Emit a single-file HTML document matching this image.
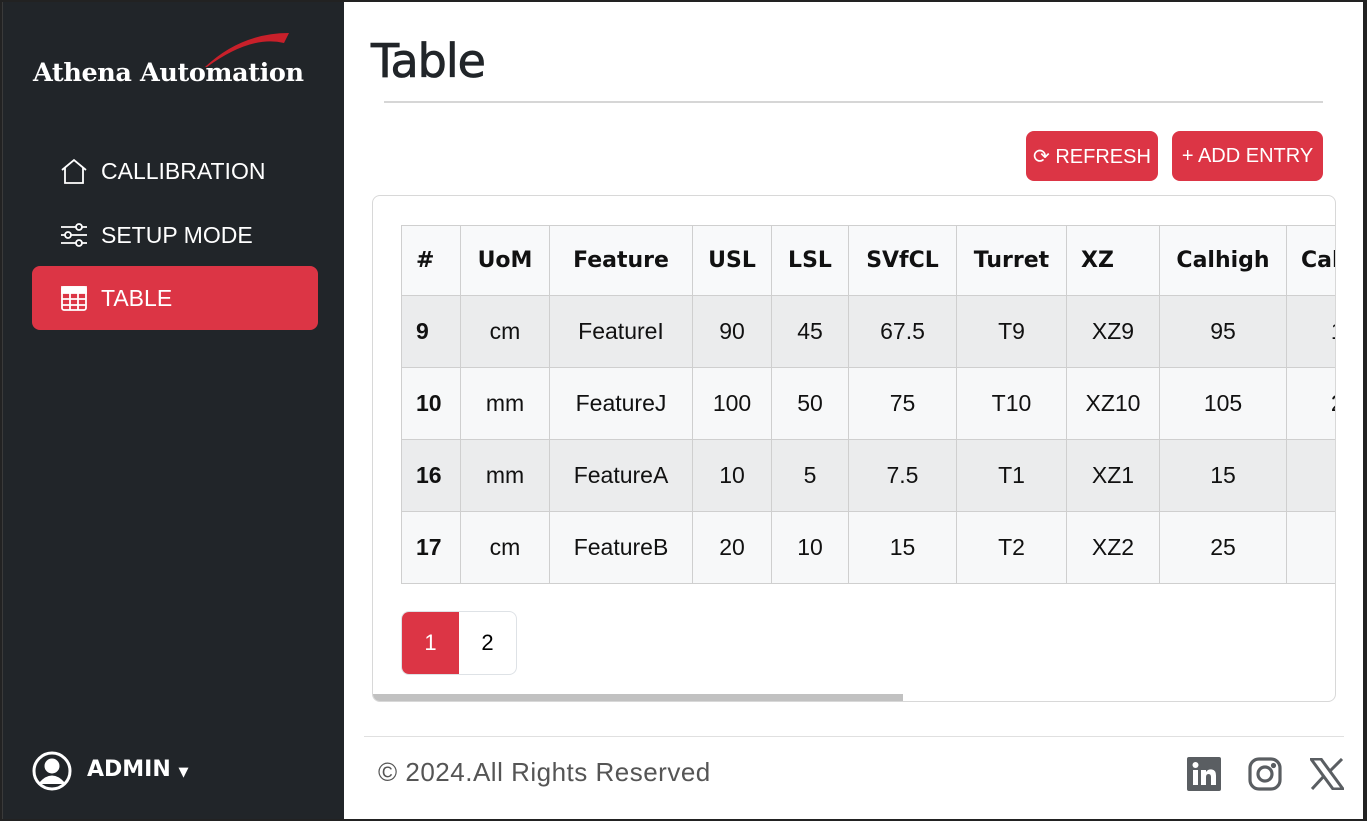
<!DOCTYPE html>
<html><head><meta charset="utf-8"><style>
*{box-sizing:border-box;margin:0;padding:0}
body{width:1367px;height:821px;overflow:hidden;background:#222;font-family:"DejaVu Sans","Liberation Sans",sans-serif;position:relative}
.side{position:absolute;left:2px;top:2px;width:342px;height:817px;background:#212529;border-left:1px solid #3a3a3a}
.main{position:absolute;left:344px;top:2px;width:1019px;height:817px;background:#fff}
.logo{position:absolute;left:30px;top:56px;color:#fff;font-family:"DejaVu Serif","Liberation Serif",serif;font-weight:bold;font-size:25.5px;letter-spacing:-0.4px}
.nav{position:absolute;left:56px;color:#fff;font-size:23px;display:flex;align-items:center;gap:12px;font-family:"Liberation Sans",sans-serif}
.act{position:absolute;left:29px;top:264px;width:286px;height:64px;background:#dc3545;border-radius:8px}
h1{position:absolute;left:27px;top:32px;font-size:46px;color:#212529;font-family:"DejaVu Sans",sans-serif;font-weight:normal;letter-spacing:-1px;-webkit-text-stroke:0.8px #212529}
.hr{position:absolute;left:40px;top:99px;width:939px;height:2px;background:#d6d6d6}
.btn{position:absolute;top:129px;height:50px;background:#dc3545;color:#fff;border-radius:8px;font-size:20px;font-family:"Liberation Sans",sans-serif;display:flex;align-items:center;justify-content:center}
.card{position:absolute;left:28px;top:193px;width:964px;height:507px;border:1px solid #d8d8d8;border-radius:8px;overflow:hidden}
table{position:absolute;left:28px;top:29px;border-collapse:collapse;table-layout:fixed;width:1012px;font-size:23px;color:#111}
td,th{border:1.5px solid #cfcfcf;text-align:center;height:72px;font-family:"Liberation Sans",sans-serif;white-space:nowrap;overflow:hidden}
th{height:70px;background:#f8f9fa;font-weight:bold;font-family:"DejaVu Sans",sans-serif;font-size:22px}
th:first-child,td:first-child{text-align:left;padding-left:14px;font-weight:bold}
tr.g td{background:#ebeced}tr.l td{background:#f7f8f9}
.pg{position:absolute;left:28px;top:415px;display:flex;border:1px solid #dee2e6;border-radius:8px;overflow:hidden;height:64px}
.pg div{width:57px;display:flex;align-items:center;justify-content:center;font-size:22px;font-family:"Liberation Sans",sans-serif}
.sb{position:absolute;left:0;bottom:0;width:530px;height:7px;background:#c1c1c1}
.fhr{position:absolute;left:20px;top:734px;width:980px;height:1px;background:#e0e0e0}
.foot{position:absolute;left:34px;top:755px;font-size:26px;color:#555;font-family:"Liberation Sans",sans-serif;letter-spacing:0.5px}
</style></head><body>
<div class="side">
<svg style="position:absolute;left:198px;top:27px" width="90" height="40" viewBox="0 0 90 40"><path d="M4 38 Q40 4 88 4 L83 14 Q50 6 6 38Z" fill="#c8202a"/></svg>
<div class="logo">Athena Automation</div>
<div class="nav" style="top:155px"><svg width="30" height="28" viewBox="0 0 30 28" fill="none" stroke="#fff" stroke-width="1.8"><path d="M3 13 L15 3 L27 13 M6 11 V26 H24 V11"/></svg>CALLIBRATION</div>
<div class="nav" style="top:219px"><svg width="30" height="28" viewBox="0 0 30 28" fill="none" stroke="#fff" stroke-width="1.8"><path d="M2 6H28M2 14H28M2 22H28"/><circle cx="20" cy="6" r="3" fill="#212529"/><circle cx="9" cy="14" r="3" fill="#212529"/><circle cx="20" cy="22" r="3" fill="#212529"/></svg>SETUP MODE</div>
<div class="act"></div>
<div class="nav" style="top:282px"><svg width="30" height="28" viewBox="0 0 28 28" fill="none" stroke="#fff" stroke-width="1.8"><rect x="2" y="3" width="24" height="23" rx="2"/><rect x="2" y="3" width="24" height="6" fill="#fff"/><path d="M2 15H26M2 21H26M10 9V26M18 9V26"/></svg>TABLE</div>
<svg style="position:absolute;left:28px;top:748px" width="42" height="42" viewBox="0 0 42 42" fill="none" stroke="#fff" stroke-width="3"><circle cx="21" cy="21" r="18"/><circle cx="21" cy="16" r="6" fill="#fff"/><path d="M9 34 Q21 20 33 34" fill="#fff"/></svg>
<div style="position:absolute;left:84px;top:755px;color:#fff;font-weight:bold;font-size:22px">ADMIN <span style="font-size:13px">▼</span></div>
</div>
<div class="main">
<h1>Table</h1><div class="hr"></div>
<div class="btn" style="left:682px;width:132px">⟳ REFRESH</div>
<div class="btn" style="left:828px;width:151px">+ ADD ENTRY</div>
<div class="card">
<table>
<colgroup><col style="width:59px"><col style="width:89px"><col style="width:143px"><col style="width:79px"><col style="width:77px"><col style="width:108px"><col style="width:110px"><col style="width:93px"><col style="width:127px"><col style="width:127px"></colgroup>
<tr><th>#</th><th>UoM</th><th>Feature</th><th>USL</th><th>LSL</th><th>SVfCL</th><th>Turret</th><th style="text-align:left;padding-left:14px">XZ</th><th>Calhigh</th><th style="text-align:left;padding-left:14px">Callow</th></tr>
<tr class="g"><td>9</td><td>cm</td><td>FeatureI</td><td>90</td><td>45</td><td>67.5</td><td>T9</td><td>XZ9</td><td>95</td><td>105</td></tr>
<tr class="l"><td>10</td><td>mm</td><td>FeatureJ</td><td>100</td><td>50</td><td>75</td><td>T10</td><td>XZ10</td><td>105</td><td>205</td></tr>
<tr class="g"><td>16</td><td>mm</td><td>FeatureA</td><td>10</td><td>5</td><td>7.5</td><td>T1</td><td>XZ1</td><td>15</td><td>5</td></tr>
<tr class="l"><td>17</td><td>cm</td><td>FeatureB</td><td>20</td><td>10</td><td>15</td><td>T2</td><td>XZ2</td><td>25</td><td>5</td></tr>
</table>
<div class="pg"><div style="background:#dc3545;color:#fff">1</div><div>2</div></div>
<div class="sb"></div>
</div>
<div class="fhr"></div>
<div class="foot">© 2024.All Rights Reserved</div>
<svg style="position:absolute;left:843px;top:755px" width="34" height="34" viewBox="0 0 34 34"><rect width="34" height="34" rx="2" fill="#5a5e62"/><rect x="6" y="13" width="5" height="15" fill="#fff"/><circle cx="8.5" cy="8" r="3" fill="#fff"/><path d="M14 13h5v2q2-3 6-2.5 4 .7 4 6V28h-5v-8q0-3-2.5-3T19 20v8h-5Z" fill="#fff"/></svg>
<svg style="position:absolute;left:904px;top:755px" width="34" height="34" viewBox="0 0 34 34" fill="none" stroke="#5a5e62" stroke-width="3.2"><rect x="2" y="2" width="30" height="30" rx="9"/><circle cx="17" cy="17" r="7"/><circle cx="25.5" cy="8.5" r="1" fill="#5a5e62"/></svg>
<svg style="position:absolute;left:966px;top:756px" width="34" height="32" viewBox="0 0 34 32"><path d="M1 1h10l22 30H23Z" fill="none" stroke="#5a5e62" stroke-width="3"/><path d="M2 31 14 18M20 13 32 1" stroke="#5a5e62" stroke-width="3"/></svg>
</div>
</body></html>
